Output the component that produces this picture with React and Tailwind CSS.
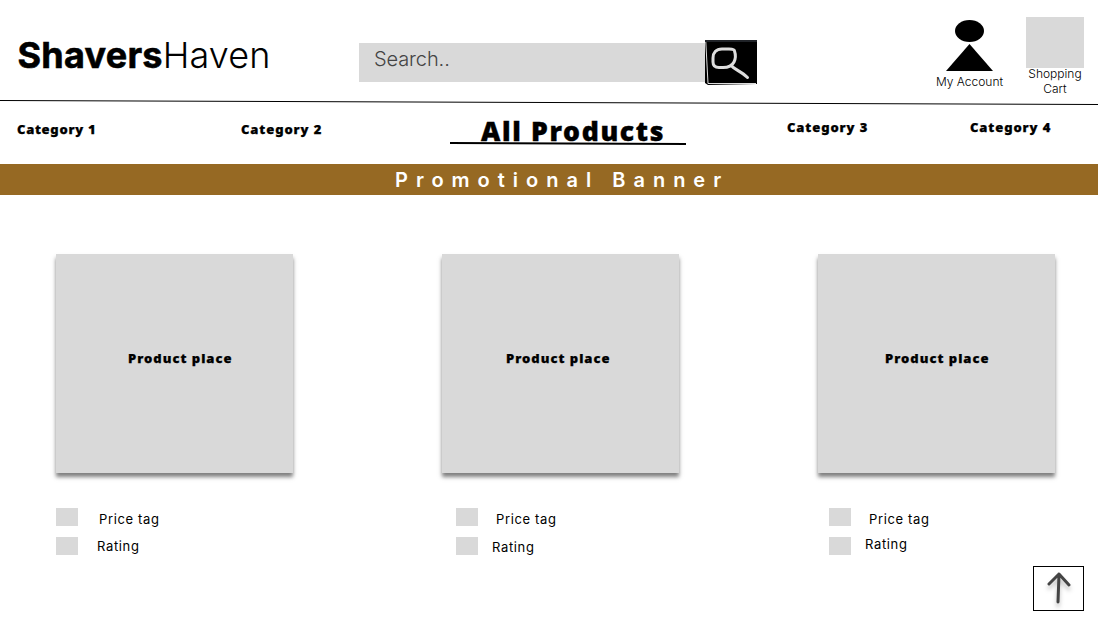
const DISPLAY = "font-['Noto_Sans',sans-serif] font-black whitespace-nowrap [-webkit-text-stroke:0.25px_black]";

const products = [
  { cell: 'ml-14 w-[237px]', title: 'pl-[72px]', details: '', price: 'ml-[21px] mt-[2px]', rating: 'ml-[19px] mt-0' },
  { cell: 'ml-[149px] w-[237px]', title: 'pl-[64px]', details: 'pl-[14px]', price: 'ml-[18px] mt-[2px]', rating: 'ml-[14px] mt-[1px]' },
  { cell: 'ml-[139px] w-[237px]', title: 'pl-[67px]', details: 'pl-[11px]', price: 'ml-[18px] mt-[2px]', rating: 'ml-[14px] -mt-[2px]' },
];

function Header() {
  return (
    <header className="flex h-[100px] items-start">
      <h1 className="ml-[17.5px] mt-[33px] w-[341.5px] whitespace-nowrap text-[36px] leading-[44px]">
        <span className="font-bold tracking-[0.25px] [-webkit-text-stroke:0.6px_black]">Shavers</span>
        <span className="font-light tracking-[0.1px]">Haven</span>
      </h1>
      <div className="mt-10 flex w-[398px] items-start">
        <div className="mt-[3px] h-[39px] w-[346px] bg-[#d9d9d9] pl-[15px] pt-[4px] text-[20px] font-light leading-6 tracking-[-0.1px] text-[#444]">
          Search..
        </div>
        <svg className="h-[45px] w-[52px]" viewBox="0 0 52 45" fill="none">
          <path d="M0 0H52V44L3 45L0 43Z" fill="#000" />
          <path d="M0 1H52" stroke="#202328" strokeWidth="2" />
          <path d="M.8 2L3 43.5L51 43.5" stroke="#ddd" strokeWidth="1" />
          <path d="M29.5 11C29.5 9 27 9 24 9H17C11 9 8 13 8 18V22C8 26 10 27.5 14 27.5H18C23 27.5 27 26 29 22C31 18 30.5 14 29.5 11M26 25C28 29 36 31 42.5 37.5" stroke="#ddd" strokeWidth="3" strokeLinecap="round" strokeLinejoin="round" />
        </svg>
      </div>
      <div className="ml-[177px] flex w-[71px] flex-col items-center pt-5">
        <svg className="h-[51px] w-12" viewBox="0 0 48 51">
          <ellipse cx="23.5" cy="11" rx="14.5" ry="11" />
          <path d="M23.5 24L47 51H0Z" />
        </svg>
        <span className="mt-[3px] whitespace-nowrap text-[12px] font-light leading-[15px]">My Account</span>
      </div>
      <div className="ml-[21px] flex w-[58px] flex-col items-center pt-[17px]">
        <div className="h-[51px] w-[58px] bg-[#d9d9d9]" />
        <span className="-mt-[2px] text-center text-[12px] font-light leading-[15px]">Shopping Cart</span>
      </div>
    </header>
  );
}

function Nav() {
  return (
    <nav className={`${DISPLAY} flex h-[59px] items-start text-[13px] leading-[18px] tracking-[0.9px]`}>
      <a className="ml-[17px] mt-[15px] w-[224px] tracking-[0.7px]">Category 1</a>
      <a className="mt-[15px] w-[209px]">Category 2</a>
      <a className="mt-[9px] flex w-[236px] flex-col text-[26.6px] leading-[34px] tracking-[1.65px] [-webkit-text-stroke:0.4px_black]">
        <span className="ml-[31px]">All Products</span>
        <svg className="-mt-[7px] h-1 w-[236px]" viewBox="0 0 236 4"><path d="M0 2L236 3" stroke="#000" strokeWidth="2" /></svg>
      </a>
      <a className="ml-[101px] mt-[13px] w-[183px]">Category 3</a>
      <a className="mt-[13px]">Category 4</a>
    </nav>
  );
}

function Product({ item }) {
  return (
    <article className={`${item.cell} shrink-0`}>
      <div className={`${item.title} ${DISPLAY} h-[219px] bg-[#d9d9d9] pt-[95px] text-[13px] leading-[18px] tracking-[1px] shadow-[0_4px_4px_rgba(0,0,0,0.5)]`}>
        Product place
      </div>
      <div className={`${item.details} flex flex-col gap-[11px] pt-[35px] text-[13px] leading-[18px] tracking-[0.65px]`}>
        <div className="flex h-[18px]">
          <span className="w-[22px] bg-[#d9d9d9]" />
          <span className={item.price}>Price tag</span>
        </div>
        <div className="flex h-[18px]">
          <span className="w-[22px] bg-[#d9d9d9]" />
          <span className={item.rating}>Rating</span>
        </div>
      </div>
    </article>
  );
}

export default function App() {
  return (
    <div className="flex h-[638px] w-[1098px] flex-col overflow-hidden bg-white font-['Inter',sans-serif] text-black">
      <Header />
      <svg className="h-[5px] w-full shrink-0" viewBox="0 0 1098 5"><path d="M0 .5L1098 4.5" stroke="#000" /></svg>
      <Nav />
      <div className="h-[31px] bg-[#966923] pl-[395px] text-[20px] font-semibold leading-[32px] tracking-[8px] text-white whitespace-nowrap">
        Promotional Banner
      </div>
      <main className="flex pt-[59px]">
        {products.map((item, i) => <Product key={i} item={item} />)}
      </main>
      <button className="ml-[1033px] mt-[11px] flex h-[45px] w-[51px] items-start justify-center border border-black bg-white">
        <svg className="h-[43px] w-[49px] drop-shadow-[0_4px_2px_rgba(0,0,0,0.25)]" viewBox="0 0 49 43" fill="none" stroke="#444" strokeWidth="3" strokeLinecap="round" strokeLinejoin="round">
          <path d="M24 35L25 7M15 17L25 7L35 18" />
        </svg>
      </button>
    </div>
  );
}
